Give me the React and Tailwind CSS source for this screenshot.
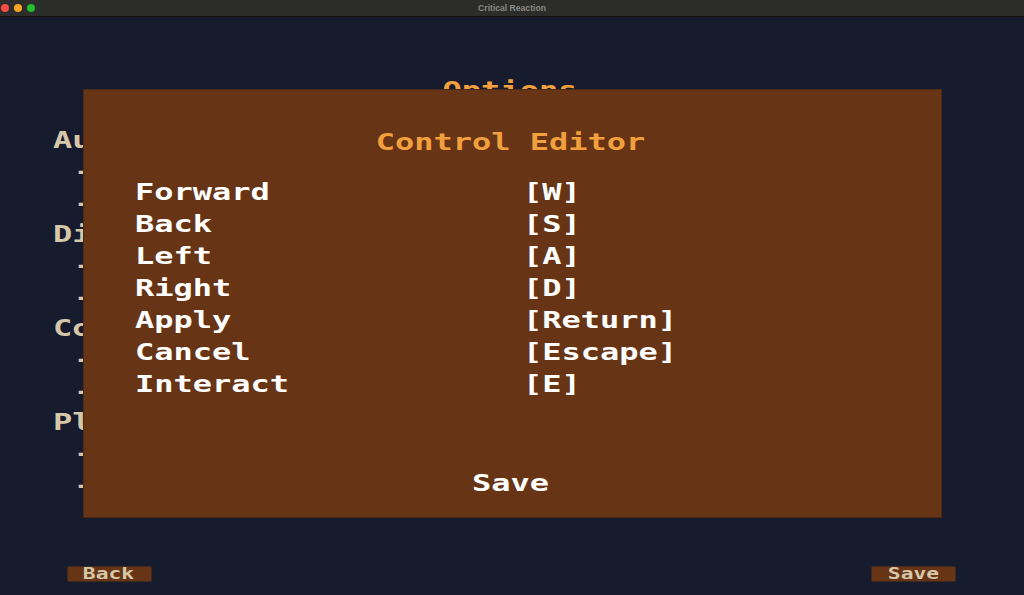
const rows = [
  ["Forward", "[W]"],
  ["Back", "[S]"],
  ["Left", "[A]"],
  ["Right", "[D]"],
  ["Apply", "[Return]"],
  ["Cancel", "[Escape]"],
  ["Interact", "[E]"],
];
const sections = ["Au", "Di", "Co", "Pl"];
const F = "font-['DejaVu_Sans_Mono',monospace] font-bold";
const T = ({ children, className = "" }) => (
  <span className={`inline-block scale-y-[0.72] origin-center ${className}`}>{children}</span>
);

export default function App() {
  return (
    <div className="relative w-[1024px] h-[595px] overflow-hidden bg-[#161b2e] flex flex-col">
      <div className="relative h-[17px] shrink-0 bg-[#2c2c2a] border-b border-[#111111] flex items-center justify-center">
        <div className="absolute left-[1px] top-[4px] flex gap-[5px]">
          <span className="w-[8px] h-[8px] rounded-full bg-[#fb4a4a]" />
          <span className="w-[8px] h-[8px] rounded-full bg-[#fca524]" />
          <span className="w-[8px] h-[8px] rounded-full bg-[#1fbf2c]" />
        </div>
        <span className="font-['Liberation_Sans',sans-serif] font-bold text-[8.6px] leading-none text-[#8a8a88]">Critical Reaction</span>
      </div>

      <div className={`flex-1 flex flex-col ${F} text-[32px] text-[#d5c7a8]`}>
        <div className="pt-[57px] pr-[4px] h-[108px] text-center text-[#f2a03d] leading-[32px]"><T>Options</T></div>
        <div className="pl-[53px] flex flex-col leading-[31.33px]">
          {sections.map((s) => (
            <div key={s} className="flex flex-col">
              <div className="h-[31.33px]"><T>{s}</T></div>
              <div className="h-[31.33px] pl-[21px]"><T>-</T></div>
              <div className="h-[31.33px] pl-[21px]"><T>-</T></div>
            </div>
          ))}
        </div>
        <div className="mt-auto mb-[13px] px-[67px] flex justify-between text-[21.3px]">
          <div className="w-[85px] h-[16px] pr-[2px] rounded-[2px] bg-[#673516] border border-[#3e2a1e] flex items-center justify-center leading-none"><T>Back</T></div>
          <div className="w-[85px] h-[16px] mr-[1px] rounded-[2px] bg-[#673516] border border-[#3e2a1e] flex items-center justify-center leading-none"><T>Save</T></div>
        </div>
      </div>

      <div className={`absolute left-[83px] top-[89px] w-[859px] h-[429px] bg-[#673516] border border-[#4a2a16] flex flex-col ${F} text-[32px] text-white`}>
        <div className="pt-[36px] pr-[4px] text-center text-[#f2a03d] leading-[32px]"><T>Control Editor</T></div>
        <div className="pt-[18px] pl-[51px] flex flex-col">
          {rows.map(([a, b]) => (
            <div key={a} className="grid grid-cols-[388px_1fr] h-[32px] leading-[32px]">
              <span><T>{a}</T></span>
              <span><T>{b}</T></span>
            </div>
          ))}
        </div>
        <div className="mt-auto pb-[18px] pr-[4px] text-center leading-[32px]"><T>Save</T></div>
      </div>
    </div>
  );
}
